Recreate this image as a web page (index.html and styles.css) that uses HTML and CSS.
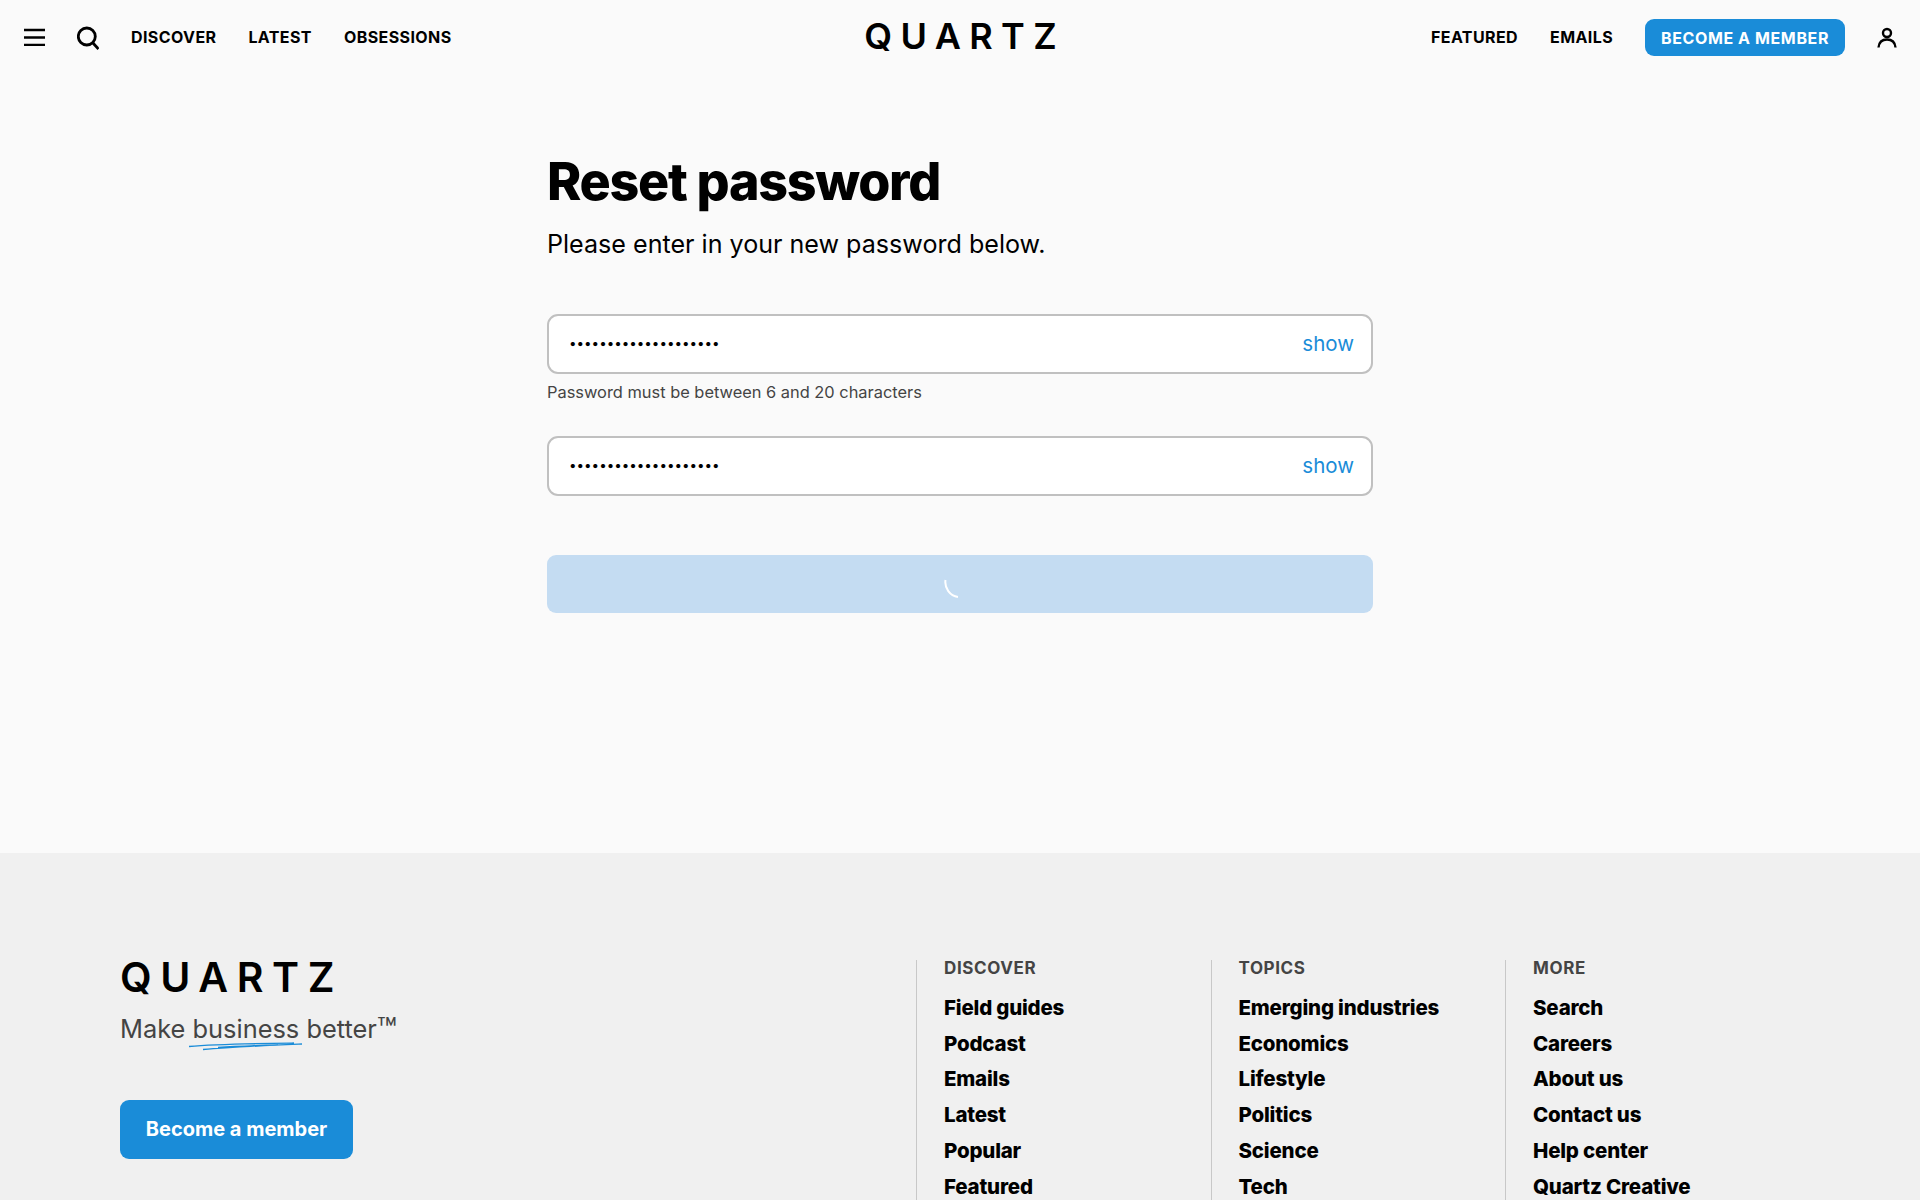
FILE: index.html
```html
<!DOCTYPE html>
<html>
  <head>
    <meta charset="UTF-8" />
    <title>Reset password - Quartz</title>
    <link rel="stylesheet" href="styles.css">
  </head>
  <body>
    <header class="site-header">
      <nav class="nav-left">
        <svg class="icon-menu" width="21" height="18" viewBox="0 0 21 18"><path d="M0 2h21M0 9.500h21M0 17h21" fill="none" stroke="#000" stroke-width="2.600"/></svg>
        <svg class="icon-search" width="22" height="24" viewBox="0 0 22 24"><circle cx="9.800" cy="10.500" r="8.500" fill="none" stroke="#000" stroke-width="2.800"/><path d="M15.500 16.500L21.500 23" fill="none" stroke="#000" stroke-width="2.800"/></svg>
        <a class="nav-link">DISCOVER</a>
        <a class="nav-link">LATEST</a>
        <a class="nav-link">OBSESSIONS</a>
      </nav>
      <div class="logo">QUARTZ</div>
      <nav class="nav-right">
        <a class="nav-link">FEATURED</a>
        <a class="nav-link">EMAILS</a>
        <a class="member-pill">BECOME A MEMBER</a>
        <svg class="icon-user" width="20" height="22" viewBox="0 0 20 22"><circle cx="10" cy="6" r="4" fill="none" stroke="#000" stroke-width="2.400"/><path d="M1.500 20.500C2 15 5.500 12.500 10 12.500S18 15 18.500 20.500" fill="none" stroke="#000" stroke-width="2.400"/></svg>
      </nav>
    </header>

    <main class="reset">
      <h1>Reset password</h1>
      <p class="intro">Please enter in your new password below.</p>

      <div class="field">
        <input type="password" value="aaaaaaaaaaaaaaaaaaaa" />
        <span class="show">show</span>
      </div>
      <p class="hint">Password must be between 6 and 20 characters</p>

      <div class="field field-second">
        <input type="password" value="aaaaaaaaaaaaaaaaaaaa" />
        <span class="show">show</span>
      </div>

      <button class="submit" type="button">
        <svg width="32" height="32" viewBox="0 0 32 32"><path d="M1.500 12A15 15 0 0 0 14 29" fill="none" stroke="#fff" stroke-width="2"/></svg>
      </button>
    </main>

    <footer class="site-footer">
      <div class="brand">
        <div class="logo logo-footer">QUARTZ</div>
        <p class="tagline">Make <span class="scribble">business<svg width="116" height="10" viewBox="0 0 116 10"><path d="M1 5.500C30 3 70 2.500 106 2M15 8.500C45 6 80 4.500 114 3M30 6.500C50 5 70 4.500 90 4" fill="none" stroke="#1a8cd8" stroke-width="1.300"/></svg></span> better<span class="tm">™</span></p>
        <a class="member-btn">Become a member</a>
      </div>
      <div class="col">
        <h4>DISCOVER</h4>
        <a>Field guides</a>
        <a>Podcast</a>
        <a>Emails</a>
        <a>Latest</a>
        <a>Popular</a>
        <a>Featured</a>
      </div>
      <div class="col">
        <h4>TOPICS</h4>
        <a>Emerging industries</a>
        <a>Economics</a>
        <a>Lifestyle</a>
        <a>Politics</a>
        <a>Science</a>
        <a>Tech</a>
      </div>
      <div class="col">
        <h4>MORE</h4>
        <a>Search</a>
        <a>Careers</a>
        <a>About us</a>
        <a>Contact us</a>
        <a>Help center</a>
        <a>Quartz Creative</a>
      </div>
    </footer>
  </body>
</html>
```

FILE: styles.css
```css
* {
  box-sizing: border-box;
}

html,
body {
  height: 100%;
}

body {
  margin: 0;
  display: flex;
  flex-direction: column;
  overflow: hidden;
  background-color: #fafafa;
  color: #000;
  font-family: Inter, "Liberation Sans", sans-serif;
}

/* header */
.site-header {
  display: grid;
  grid-template-columns: 1fr auto 1fr;
  align-items: center;
  height: 75px;
  flex-shrink: 0;
  padding: 0 23px 0 24px;
}

.nav-left,
.nav-right {
  display: flex;
  align-items: center;
  column-gap: 32px;
}

.nav-right {
  justify-content: flex-end;
}

.icon-menu {
  margin-bottom: 2px;
}

.nav-link {
  padding-bottom: 2px;
  font-size: 16px;
  font-weight: 700;
  letter-spacing: 0.4px;
}

.logo {
  padding-bottom: 3px;
  font-size: 36px;
  font-weight: 600;
  letter-spacing: 8.400px;
  margin-right: -8.400px;
  line-height: 1;
}

.member-pill {
  display: flex;
  align-items: center;
  height: 37px;
  padding: 0 16px;
  border-radius: 9px;
  background-color: #1a8cd8;
  color: #fff;
  font-size: 16px;
  font-weight: 700;
  letter-spacing: 0.6px;
}

/* form */
.reset {
  width: 826px;
  height: 778px;
  flex-shrink: 0;
  margin: 0 auto;
  padding-top: 75px;
}

h1 {
  margin: 0;
  font-size: 52px;
  font-weight: 800;
  line-height: 64px;
  letter-spacing: -1.300px;
}

.intro {
  margin: 14px 0 0;
  font-size: 25.100px;
  line-height: 32px;
}

.field {
  position: relative;
  display: flex;
  margin-top: 54px;
}

.field input {
  width: 100%;
  height: 60px;
  padding: 0 80px 2px 20px;
  border: 2px solid #c0c0c0;
  border-radius: 11px;
  background-color: #fff;
  color: #000;
  font-family: Inter, sans-serif;
  font-size: 13.400px;
  outline: none;
}

.field-second {
  margin-top: 34px;
}

.show {
  position: absolute;
  right: 19px;
  top: 17px;
  color: #1a8cd8;
  font-size: 20.500px;
  line-height: 26px;
}

.hint {
  margin: 8px 0 0;
  color: #444;
  font-size: 16.400px;
  line-height: 20px;
}

.submit {
  display: flex;
  align-items: center;
  justify-content: center;
  width: 100%;
  height: 58px;
  margin-top: 59px;
  border: 0;
  border-radius: 9px;
  background-color: #c4dcf2;
}

/* footer */
.site-footer {
  flex: 1;
  display: flex;
  align-items: stretch;
  padding: 100px 0 0 120px;
  background-color: #f0f0f0;
}

.brand {
  width: 796px;
  flex-shrink: 0;
}

.logo-footer {
  padding-bottom: 0;
  font-size: 41px;
  letter-spacing: 8.600px;
  margin: 3.500px 0 0;
}

.tagline {
  margin: 15px 0 0;
  color: #444;
  font-size: 25.400px;
  line-height: 32px;
}

.tm {
  font-size: 1.300em;
  line-height: 0;
  vertical-align: -0.1em;
}

.scribble {
  position: relative;
}

.scribble svg {
  position: absolute;
  left: -5px;
  top: 28px;
}

.member-btn {
  display: flex;
  align-items: center;
  justify-content: center;
  width: 233px;
  height: 59px;
  margin-top: 55px;
  border-radius: 9px;
  background-color: #1a8cd8;
  color: #fff;
  font-size: 20px;
  font-weight: 700;
}

.col {
  width: 294.500px;
  flex-shrink: 0;
  display: flex;
  flex-direction: column;
  margin-top: 7px;
  padding-left: 27px;
  border-left: 1.500px solid #c8c8c8;
}

.col h4 {
  margin: 0 0 13px;
  color: #444;
  font-size: 17px;
  font-weight: 700;
  line-height: 17px;
  letter-spacing: 0.6px;
}

.col a {
  font-size: 20.500px;
  font-weight: 800;
  line-height: 35.700px;
  letter-spacing: -0.2px;
}
```
